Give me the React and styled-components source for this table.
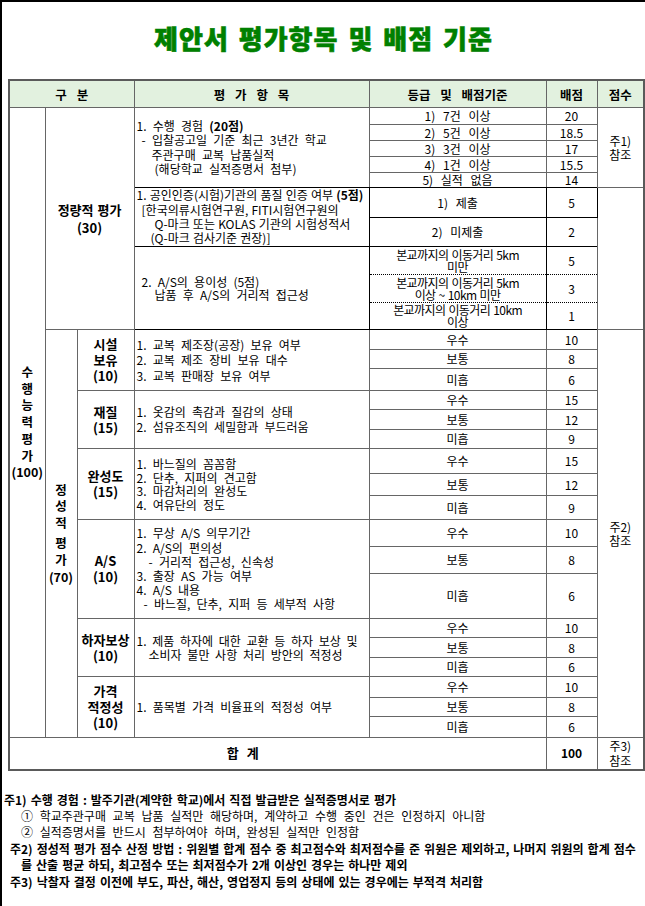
import React from 'react'
import styled, { createGlobalStyle, css } from 'styled-components'

const GlobalStyle = createGlobalStyle`
  html, body {
    margin: 0;
    padding: 0;
    background: #fff;
    overflow: hidden;
  }
  body {
    font-family: "Noto Sans CJK KR", "Noto Sans", sans-serif;
    color: #000;
  }
`

const Page = styled.div`
  border-top: 2px solid #000;
  border-left: 2px solid #000;
  min-height: 1000px;
`

const Title = styled.h1`
  margin: 0;
  padding-top: 19px;
  height: 58px;
  line-height: 34px;
  text-align: center;
  font-size: 26px;
  font-weight: 900;
  color: #008000;
  letter-spacing: 1px;
  word-spacing: 3px;
  -webkit-text-stroke: 0.6px #008000;
`

const Table = styled.table`
  margin-left: 6px;
  width: 635px;
  border-collapse: collapse;
  table-layout: fixed;
  border: 2px solid #5a5a5a;
  font-size: 12px;
  word-spacing: 3.5px;
`

const Row = styled.tr`
  height: ${(p) => p.$h}px;
`

const Th = styled.th`
  height: 26px;
  padding: 0;
  background: #e2f1df;
  border: 1px solid #666;
  font-size: 12.5px;
  font-weight: 700;
  word-spacing: 7px;
  text-align: center;
`

const borderLine = (color) => `1px solid ${color}`

const Td = styled.td`
  padding: 0;
  border: ${(p) => borderLine(p.$strong ? '#000' : '#666')};
  ${(p) => p.$strongBottom && css`border-bottom: 1px solid #000;`}
  ${(p) => (p.$dot === 'top' || p.$dot === 'both') && css`border-top: 1px dotted #000;`}
  ${(p) => (p.$dot === 'bottom' || p.$dot === 'both') && css`border-bottom: 1px dotted #000;`}
  text-align: ${(p) => (p.$left ? 'left' : 'center')};
  vertical-align: middle;
  line-height: ${(p) => p.$lh || 14}px;
  font-weight: ${(p) => (p.$bold ? 700 : 400)};
  word-spacing: ${(p) => (p.$wide ? '5px' : 'inherit')};
  white-space: pre;
  overflow: hidden;
`

const Narrow = styled.div`
  word-spacing: 1px;
  letter-spacing: -0.6px;
`

const Stack = styled.div`
  display: flex;
  flex-direction: column;
  align-items: center;
  font-size: 12.5px;
  font-weight: 700;
  line-height: 16.8px;
  word-spacing: 0;
`

const Gap = styled.div`
  height: 3px;
`

const Label = styled.div`
  font-size: 13px;
  font-weight: 700;
  line-height: ${(p) => p.$lh || 16}px;
  word-spacing: 1px;
`

const Desc = styled.div`
  padding-left: 2px;
  line-height: ${(p) => p.$lh || 14}px;
  word-spacing: ${(p) => (p.$ws != null ? p.$ws + 'px' : 'inherit')};
`

const Line = styled.div`
  padding-left: ${(p) => p.$indent || 0}px;
`

const Notes = styled.div`
  margin-top: 21px;
  font-size: 12px;
  line-height: 16.4px;
`

const Note = styled.div`
  padding-left: ${(p) => p.$indent}px;
  font-weight: ${(p) => (p.$bold ? 700 : 400)};
  word-spacing: ${(p) => (p.$bold ? '1.3px' : '4px')};
  white-space: nowrap;
`

const Bold = styled.b`
  font-weight: 700;
`

const grades = ['우수', '보통', '미흡']

const qualGroups = [
  {
    label: ['시설', '보유', '(10)'],
    items: ['1. 교복 제조장(공장) 보유 여부', '2. 교복 제조 장비 보유 대수', '3. 교복 판매장 보유 여부'],
    lh: 15.5,
    scores: [10, 8, 6],
    heights: [20, 19, 22],
  },
  {
    label: ['재질', '(15)'],
    items: ['1. 옷감의 촉감과 질감의 상태', '2. 섬유조직의 세밀함과 부드러움'],
    lh: 14.5,
    scores: [15, 12, 9],
    heights: [19, 20, 19],
  },
  {
    label: ['완성도', '(15)'],
    items: ['1. 바느질의 꼼꼼함', '2. 단추, 지퍼의 견고함', '3. 마감처리의 완성도', '4. 여유단의 정도'],
    lh: 13.5,
    scores: [15, 12, 9],
    heights: [25, 22, 24],
  },
  {
    label: ['A/S', '(10)'],
    items: [
      '1. 무상 A/S 의무기간',
      '2. A/S의 편의성',
      { t: '- 거리적 접근성, 신속성', indent: 12 },
      '3. 출장 AS 가능 여부',
      '4. A/S 내용',
      { t: '- 바느질, 단추, 지퍼 등 세부적 사항', indent: 7 },
    ],
    lh: 14.2,
    scores: [10, 8, 6],
    heights: [27, 27, 45],
  },
  {
    label: ['하자보상', '(10)'],
    items: ['1. 제품 하자에 대한 교환 등 하자 보상 및', { t: '소비자 불만 사항 처리 방안의 적정성', indent: 12 }],
    lh: 14,
    ws: 3,
    scores: [10, 8, 6],
    heights: [19, 20, 19],
  },
  {
    label: ['가격', '적정성', '(10)'],
    items: ['1. 품목별 가격 비율표의 적정성 여부'],
    lh: 14,
    scores: [10, 8, 6],
    heights: [21, 19, 21],
  },
]

const experience = [
  ['1) 7건 이상', '20', 17],
  ['2) 5건 이상', '18.5', 16],
  ['3) 3건 이상', '17', 16],
  ['4) 1건 이상', '15.5', 16],
  ['5) 실적 없음', '14', 15],
]

const distance = [
  ['본교까지의 이동거리 5km\n미만', '5', 28, 'bottom'],
  ['본교까지의 이동거리 5km\n이상 ~ 10km 미만', '3', 28, 'both'],
  ['본교까지의 이동거리 10km\n이상', '1', 27, 'top'],
]

const renderLines = (items) =>
  items.map((it, i) =>
    typeof it === 'string' ? (
      <Line key={i}>{it}</Line>
    ) : (
      <Line key={i} $indent={it.indent}>
        {it.t}
      </Line>
    ),
  )

const App = () => {
  const qualRowCount = qualGroups.length * 3

  return (
    <Page>
      <GlobalStyle />
      <Title>제안서 평가항목 및 배점 기준</Title>
      <Table>
        <colgroup>
          <col style={{ width: 36 }} />
          <col style={{ width: 32 }} />
          <col style={{ width: 57 }} />
          <col style={{ width: 235 }} />
          <col style={{ width: 177 }} />
          <col style={{ width: 51 }} />
          <col style={{ width: 47 }} />
        </colgroup>
        <thead>
          <tr>
            <Th colSpan={3}>구 분</Th>
            <Th>평 가 항 목</Th>
            <Th>등급 및 배점기준</Th>
            <Th>배점</Th>
            <Th>점수</Th>
          </tr>
        </thead>
        <tbody>
          {experience.map(([grade, score, h], i) => (
            <Row key={'e' + i} $h={h}>
              {i === 0 && (
                <>
                  <Td rowSpan={10 + qualRowCount}>
                    <Stack>
                      {['수', '행', '능', '력', '평', '가', '(100)'].map((c) => (
                        <div key={c}>{c}</div>
                      ))}
                    </Stack>
                  </Td>
                  <Td colSpan={2} rowSpan={10}>
                    <Label $lh={18}>
                      <div>정량적 평가</div>
                      <div>(30)</div>
                    </Label>
                  </Td>
                  <Td rowSpan={5} $left $strongBottom>
                    <Desc $lh={14.5}>
                      <Line>
                        1. 수행 경험 <Bold>(20점)</Bold>
                      </Line>
                      <Line $indent={5}>- 입찰공고일 기준 최근 3년간 학교</Line>
                      <Line $indent={15}>주관구매 교복 납품실적</Line>
                      <Line $indent={18}>(해당학교 실적증명서 첨부)</Line>
                    </Desc>
                  </Td>
                </>
              )}
              <Td $strongBottom={i === 4} $wide>
                {grade}
              </Td>
              <Td $strongBottom={i === 4}>{score}</Td>
              {i === 0 && (
                <Td rowSpan={5} $lh={14}>
                  {'주1)\n참조'}
                </Td>
              )}
            </Row>
          ))}

          <Row $h={30}>
            <Td rowSpan={2} $left $strong>
              <Desc $lh={14.3} $ws={0.5}>
                <Line>
                  1. 공인인증(시험)기관의 품질 인증 여부 <Bold>(5점)</Bold>
                </Line>
                <Line $indent={5}>[한국의류시험연구원, FITI시험연구원의</Line>
                <Line $indent={18}>Q-마크 또는 KOLAS 기관의 시험성적서</Line>
                <Line $indent={14}>(Q-마크 검사기준 권장)]</Line>
              </Desc>
            </Td>
            <Td $strong $wide>
              1) 제출
            </Td>
            <Td $strong>5</Td>
            <Td rowSpan={5} />
          </Row>
          <Row $h={29}>
            <Td $strong $wide>
              2) 미제출
            </Td>
            <Td $strong>2</Td>
          </Row>

          {distance.map(([grade, score, h, dot], i) => (
            <Row key={'d' + i} $h={h}>
              {i === 0 && (
                <Td rowSpan={3} $left $strong>
                  <Desc $lh={13.5}>
                    <Line $indent={5}>2. A/S의 용이성 (5점)</Line>
                    <Line $indent={18}>납품 후 A/S의 거리적 접근성</Line>
                  </Desc>
                </Td>
              )}
              <Td $strong $dot={dot} $lh={12}>
                <Narrow>{grade}</Narrow>
              </Td>
              <Td $strong $dot={dot}>
                {score}
              </Td>
            </Row>
          ))}

          {qualGroups.map((g, gi) =>
            g.scores.map((score, si) => (
              <Row key={'q' + gi + si} $h={g.heights[si]}>
                {gi === 0 && si === 0 && (
                  <Td rowSpan={qualRowCount}>
                    <Stack>
                      <div>정</div>
                      <div>성</div>
                      <div>적</div>
                      <Gap />
                      <div>평</div>
                      <div>가</div>
                      <div>(70)</div>
                    </Stack>
                  </Td>
                )}
                {si === 0 && (
                  <>
                    <Td rowSpan={3}>
                      <Label $lh={16}>
                        {g.label.map((l) => (
                          <div key={l}>{l}</div>
                        ))}
                      </Label>
                    </Td>
                    <Td rowSpan={3} $left>
                      <Desc $lh={g.lh} $ws={g.ws}>
                        {renderLines(g.items)}
                      </Desc>
                    </Td>
                  </>
                )}
                <Td>{grades[si]}</Td>
                <Td>{score}</Td>
                {gi === 0 && si === 0 && (
                  <Td rowSpan={qualRowCount} $lh={14}>
                    {'주2)\n참조'}
                  </Td>
                )}
              </Row>
            )),
          )}

          <Row $h={32}>
            <Td colSpan={5} $bold>
              <Label $lh={16} style={{ paddingRight: 70, wordSpacing: 5 }}>
                합 계
              </Label>
            </Td>
            <Td $bold>100</Td>
            <Td $lh={15}>{'주3)\n참조'}</Td>
          </Row>
        </tbody>
      </Table>

      <Notes>
        <Note $indent={2} $bold>
          주1) 수행 경험 : 발주기관(계약한 학교)에서 직접 발급받은 실적증명서로 평가
        </Note>
        <Note $indent={19}>① 학교주관구매 교복 납품 실적만 해당하며, 계약하고 수행 중인 건은 인정하지 아니함</Note>
        <Note $indent={19}>② 실적증명서를 반드시 첨부하여야 하며, 완성된 실적만 인정함</Note>
        <Note $indent={8} $bold>
          주2) 정성적 평가 점수 산정 방법 : 위원별 합계 점수 중 최고점수와 최저점수를 준 위원은 제외하고, 나머지 위원의 합계 점수
        </Note>
        <Note $indent={19} $bold>
          를 산출 평균 하되, 최고점수 또는 최저점수가 2개 이상인 경우는 하나만 제외
        </Note>
        <Note $indent={8} $bold>
          주3) 낙찰자 결정 이전에 부도, 파산, 해산, 영업정지 등의 상태에 있는 경우에는 부적격 처리함
        </Note>
      </Notes>
    </Page>
  )
}

export default App
